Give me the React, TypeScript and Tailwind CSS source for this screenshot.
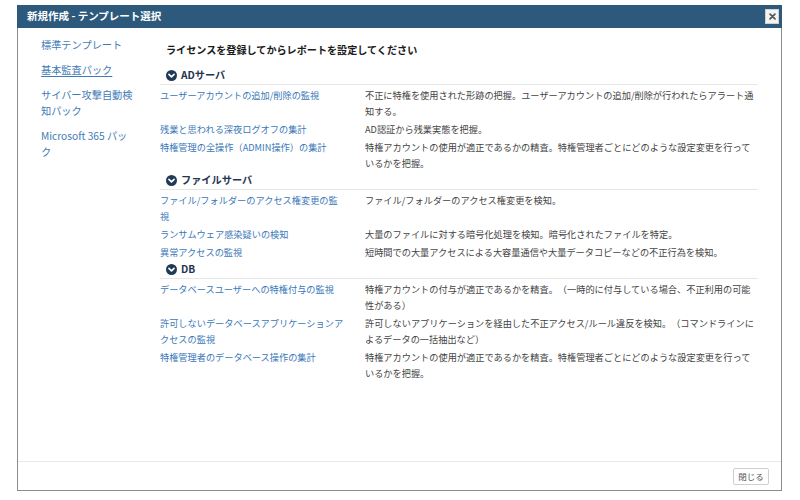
import React from "react";

type Row = { name: string; desc: string };
type Section = { title: string; rows: Row[] };

const sections: Section[] = [
  {
    title: "ADサーバ",
    rows: [
      {
        name: "ユーザーアカウントの追加/削除の監視",
        desc: "不正に特権を使用された形跡の把握。ユーザーアカウントの追加/削除が行われたらアラート通知する。",
      },
      { name: "残業と思われる深夜ログオフの集計", desc: "AD認証から残業実態を把握。" },
      {
        name: "特権管理の全操作（ADMIN操作）の集計",
        desc: "特権アカウントの使用が適正であるかの精査。特権管理者ごとにどのような設定変更を行っているかを把握。",
      },
    ],
  },
  {
    title: "ファイルサーバ",
    rows: [
      { name: "ファイル/フォルダーのアクセス権変更の監視", desc: "ファイル/フォルダーのアクセス権変更を検知。" },
      { name: "ランサムウェア感染疑いの検知", desc: "大量のファイルに対する暗号化処理を検知。暗号化されたファイルを特定。" },
      { name: "異常アクセスの監視", desc: "短時間での大量アクセスによる大容量通信や大量データコピーなどの不正行為を検知。" },
    ],
  },
  {
    title: "DB",
    rows: [
      {
        name: "データベースユーザーへの特権付与の監視",
        desc: "特権アカウントの付与が適正であるかを精査。（一時的に付与している場合、不正利用の可能性がある）",
      },
      {
        name: "許可しないデータベースアプリケーションアクセスの監視",
        desc: "許可しないアプリケーションを経由した不正アクセス/ルール違反を検知。（コマンドラインによるデータの一括抽出など）",
      },
      {
        name: "特権管理者のデータベース操作の集計",
        desc: "特権アカウントの使用が適正であるかを精査。特権管理者ごとにどのような設定変更を行っているかを把握。",
      },
    ],
  },
];

const navItems = ["標準テンプレート", "基本監査パック", "サイバー攻撃自動検知パック", "Microsoft 365 パック"];

function CircleChevron() {
  return (
    <svg width="11" height="11" viewBox="0 0 16 16" className="shrink-0">
      <circle cx="8" cy="8" r="8" fill="#1f3a57" />
      <path d="M4.3 6.4 L8 10 L11.7 6.4" fill="none" stroke="#ffffff" strokeWidth="2.4" strokeLinecap="round" strokeLinejoin="round" />
    </svg>
  );
}

export default function App() {
  return (
    <div
      className="w-[800px] h-[500px] bg-white pl-[17px] pt-[5px] [text-spacing-trim:space-all]"
      style={{ fontFamily: '"Noto Sans CJK JP", "Noto Sans", sans-serif' }}
    >
      <div className="w-[765px] h-[486px] flex flex-col border border-t-0 border-[#8c8c8c] bg-white">
        {/* title bar */}
        <div className="h-[23px] bg-[#2d5a7c] flex items-center justify-between pl-[10px] pr-[3px] -mx-px">
          <span className="text-white font-bold text-[10.5px] leading-none">新規作成 - テンプレート選択</span>
          <div className="w-[14px] h-[15px] bg-[#f3f3f3] border border-[#d0d0d0] flex items-center justify-center">
            <svg width="7" height="7" viewBox="0 0 10 10">
              <path d="M1.5 1.5 L8.5 8.5 M8.5 1.5 L1.5 8.5" stroke="#555" strokeWidth="2.4" strokeLinecap="round" />
            </svg>
          </div>
        </div>

        {/* body */}
        <div className="flex-1 flex pl-[23px] pr-[23px]">
          <nav className="w-[93px] pt-[9px] flex flex-col gap-[9px]">
            {navItems.map((n, i) => (
              <div
                key={n}
                className={`text-[10.2px] leading-[16px] text-[#3f7bb6] ${i === 1 ? "underline underline-offset-2" : ""}`}
              >
                {n}
              </div>
            ))}
          </nav>
          <main className="ml-[26px] flex-1 pt-[13px]">
            <div className="pl-[6px] h-[18px] leading-[18px] text-[10.1px] font-semibold text-[#1a1a1a] mb-[8px]">
              ライセンスを登録してからレポートを設定してください
            </div>
            {sections.map((s) => (
              <section key={s.title}>
                <div className="h-[18px] flex items-center gap-[4px] pl-[6px] border-b border-[#e6e6e6]">
                  <CircleChevron />
                  <span className="text-[10.2px] font-bold text-[#1f3550] leading-none">{s.title}</span>
                </div>
                <div className="pt-px">
                  {s.rows.map((r) => (
                    <div key={r.name} className="grid grid-cols-[186px_1fr] gap-x-[19px] py-px text-[9.2px] leading-[16px]">
                      <div className="text-[#3a78b8]">{r.name}</div>
                      <div className="text-[#444444]">{r.desc}</div>
                    </div>
                  ))}
                </div>
              </section>
            ))}
          </main>
        </div>

        {/* footer */}
        <div className="h-[29px] border-t border-[#e8e8e8] flex items-center justify-end pr-[12px]">
          <div className="w-[36px] h-[17px] border border-[#cfcfcf] rounded-[2px] bg-white flex items-center justify-center text-[8.5px] text-[#555] leading-none">
            閉じる
          </div>
        </div>
      </div>
    </div>
  );
}
